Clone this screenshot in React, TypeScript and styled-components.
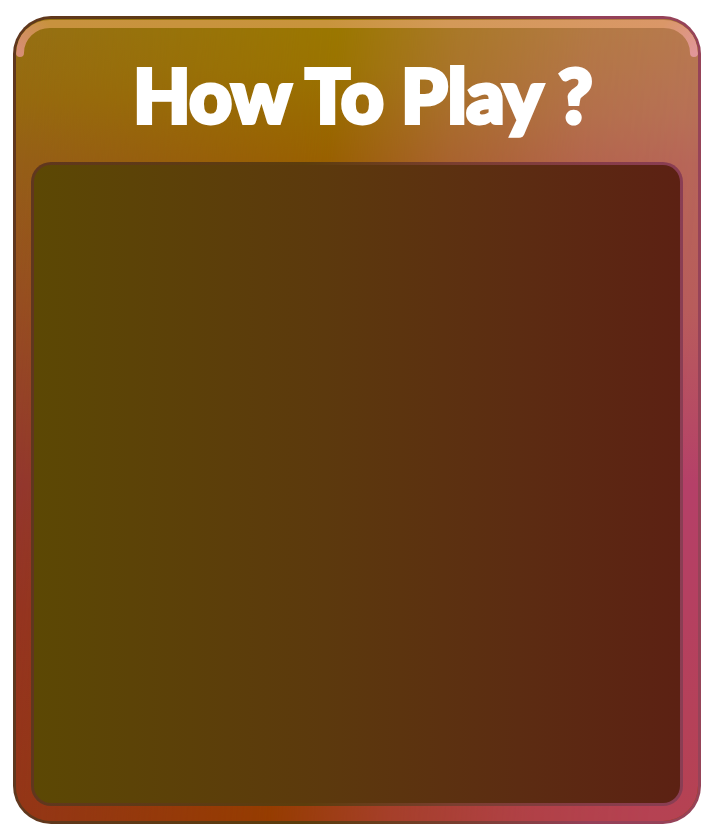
import React from "react";
import styled, { createGlobalStyle } from "styled-components";

const GlobalStyle = createGlobalStyle`
  *, *::before, *::after { box-sizing: border-box; }
  body { margin: 0; background: #ffffff; }
`;

const Page = styled.main`
  display: flex;
  min-height: 100vh;
  padding: 16px 13px 14px;
`;

const Frame = styled.section`
  display: flex;
  flex: 1;
  padding: 3px;
  border-radius: 38px;
  background: linear-gradient(90deg, #60371e 0%, #5c3d0c 42%, #7a3e30 65%, #944058 84%, #964358 100%);
`;

const Face = styled.div`
  position: relative;
  isolation: isolate;
  display: flex;
  flex: 1;
  flex-direction: column;
  padding: 0 15px;
  border-radius: 35px;
  overflow: hidden;
  background: linear-gradient(180deg, #9b7800 0%, #9b7400 6%, #996000 18%, #963c00 100%);

  &::before,
  &::after {
    content: "";
    position: absolute;
    inset: 0;
    z-index: -1;
  }

  &::before {
    background: linear-gradient(180deg, #957014 0%, #96690f 10%, #955e18 18%, #964c24 36%, #923334 58%, #943026 74%, #93341c 100%);
    mask-image: linear-gradient(95deg, #000 0%, transparent 43%);
  }

  &::after {
    background: linear-gradient(180deg, #b87b50 0%, #b87058 12%, #b8665a 18%, #b85c5c 36%, #b54068 58%, #b54060 74%, #b54252 100%);
    mask-image: linear-gradient(95deg, transparent 43%, rgba(0, 0, 0, 0.5) 59%, rgba(0, 0, 0, 0.85) 77%, #000 94%);
  }
`;

const Highlight = styled.div`
  position: absolute;
  inset: 0 0 auto;
  display: flex;
`;

const HighlightBar = styled.div`
  flex: 1;
  height: 8px;
  margin-top: 1px;
  background: linear-gradient(90deg, #c8923e, #c8943c 45%, #d39958 65%, #da9768);
`;

const Corner = styled.svg`
  display: block;
  flex: none;
  width: 34px;
  height: 40px;
`;

const Header = styled.header`
  display: flex;
  align-items: center;
  justify-content: center;
  height: 143px;
  padding: 8px 0 0 12px;
`;

const Title = styled.h1`
  margin: 0;
  color: #ffffff;
  font-family: Lato, "Open Sans", sans-serif;
  font-size: 74px;
  font-weight: 900;
  line-height: 88px;
  white-space: nowrap;
  -webkit-text-stroke: 4px #ffffff;
  paint-order: stroke fill;
`;

const PanelFrame = styled.div`
  display: flex;
  flex: 1;
  margin-bottom: 15px;
  padding: 3px;
  border-radius: 20px;
  background: linear-gradient(90deg, #60371e 0%, #5c3d0c 42%, #7a3e30 65%, #873c4a 88%, #8a3e54 100%);
`;

const Panel = styled.div`
  flex: 1;
  border-radius: 17px;
  background: linear-gradient(90deg, #5c4804 0%, #5c390d 45%, #5c2c12 75%, #5c2113 100%);
`;

const LeftCorner = () => (
  <Corner viewBox="0 0 34 40" aria-hidden="true">
    <defs>
      <linearGradient id="leftShine" x1="0" y1="1" x2="1" y2="0">
        <stop offset="0" stopColor="#d78e76" />
        <stop offset="1" stopColor="#c8923e" />
      </linearGradient>
    </defs>
    <path d="M4 34A30 29 0 0 1 34 5" fill="none" stroke="url(#leftShine)" strokeWidth="8" strokeLinecap="round" />
  </Corner>
);

const RightCorner = () => (
  <Corner viewBox="0 0 34 40" aria-hidden="true">
    <defs>
      <linearGradient id="rightShine" x1="0" y1="0" x2="1" y2="1">
        <stop offset="0" stopColor="#da9768" />
        <stop offset="1" stopColor="#e19698" />
      </linearGradient>
    </defs>
    <path d="M0 5A30 29 0 0 1 30 34" fill="none" stroke="url(#rightShine)" strokeWidth="8" strokeLinecap="round" />
  </Corner>
);

export default function App() {
  return (
    <>
      <GlobalStyle />
      <Page>
        <Frame aria-labelledby="how-to-play">
          <Face>
            <Highlight>
              <LeftCorner />
              <HighlightBar />
              <RightCorner />
            </Highlight>
            <Header>
              <Title id="how-to-play">How To Play ?</Title>
            </Header>
            <PanelFrame>
              <Panel />
            </PanelFrame>
          </Face>
        </Frame>
      </Page>
    </>
  );
}
